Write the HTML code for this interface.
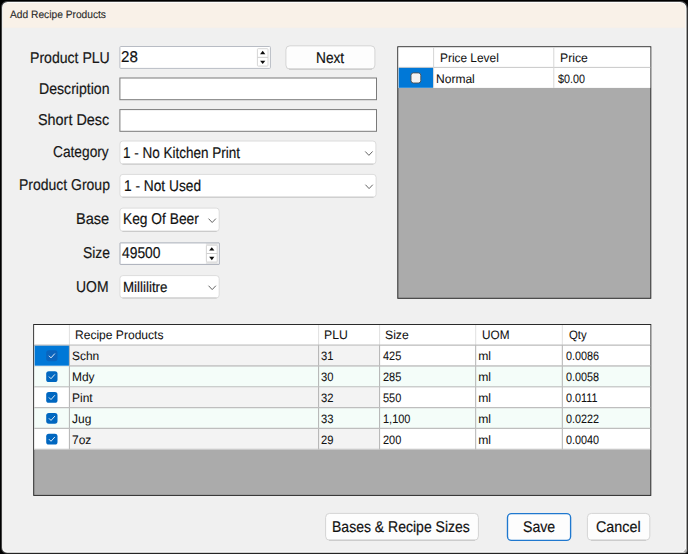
<!DOCTYPE html>
<html>
<head>
<meta charset="utf-8">
<title>Add Recipe Products</title>
<style>
html,body{margin:0;padding:0;}
body{width:688px;height:554px;background:#000;overflow:hidden;position:relative;font-family:"Liberation Sans",sans-serif;color:#111;}
svg#ui{position:absolute;left:0;top:0;}
.t{position:absolute;text-rendering:geometricPrecision;white-space:pre;line-height:1;display:inline-block;transform-origin:left top;}
</style>
</head>
<body>
<svg id="ui" width="688" height="554" viewBox="0 0 688 554">
<path d="M7.10 0.90 H680.70 A7 7 0 0 1 687.70 7.90 V551.10 A2.5 2.5 0 0 1 685.20 553.60 H6.60 A5.5 5.5 0 0 1 1.10 548.10 V6.90 A6 6 0 0 1 7.10 0.90 Z" fill="#4a4a4a"/>
<path d="M7.60 1.90 H680.00 A6.5 6.5 0 0 1 686.50 8.40 V550.70 A2 2 0 0 1 684.50 552.70 H7.10 A5 5 0 0 1 2.10 547.70 V7.40 A5.5 5.5 0 0 1 7.60 1.90 Z" fill="#fdfdfc"/>
<clipPath id="wc"><path d="M7.70 2.90 H679.70 A5.7 5.7 0 0 1 685.40 8.60 V546.90 A4.5 4.5 0 0 1 680.90 551.40 H7.20 A4.2 4.2 0 0 1 3.00 547.20 V7.60 A4.7 4.7 0 0 1 7.70 2.90 Z" fill="#000"/>
</clipPath>
<g clip-path="url(#wc)"><rect x="3.00" y="2.00" width="683.00" height="550.00" fill="#f0f0f0"/>
<rect x="3.00" y="2.00" width="683.00" height="25.80" fill="#f9f1e8"/>
</g>
<path d="M686.3 548.5 L686.3 552.2 L683.0 552.2 Z" fill="#b4b4b4"/>
<rect x="119.90" y="46.50" width="150.50" height="21.90" fill="#fff" stroke="#b8bcc4" stroke-width="1" rx="0.8"/>
<rect x="257.40" y="48.70" width="10.60" height="17.40" fill="#fff" stroke="#d6d6d6" stroke-width="1" rx="0.8"/>
<line x1="257.40" y1="57.35" x2="268.00" y2="57.35" stroke="#cfcfcf" stroke-width="1"/>
<path d="M260.10 54.23 L262.70 50.83 L265.30 54.23 Z" fill="#0c0c0c"/>
<path d="M260.10 60.72 L262.70 64.12 L265.30 60.72 Z" fill="#0c0c0c"/>
<rect x="285.90" y="45.80" width="89.00" height="23.30" fill="#fdfdfd" stroke="#d4d4d4" stroke-width="1" rx="4"/>
<line x1="289.00" y1="69.10" x2="372.00" y2="69.10" stroke="#c4c4c4" stroke-width="1"/>
<rect x="119.90" y="78.00" width="256.60" height="21.70" fill="#fff" stroke="#7a7a7a" stroke-width="1"/>
<rect x="119.90" y="109.60" width="256.60" height="21.70" fill="#fff" stroke="#7a7a7a" stroke-width="1"/>
<rect x="119.90" y="141.00" width="256.00" height="23.10" fill="#fff" stroke="#dcdcdc" stroke-width="1" rx="3"/>
<line x1="122.40" y1="164.10" x2="373.40" y2="164.10" stroke="#c6c6c6" stroke-width="1"/>
<path d="M365.50 151.75 L368.90 155.35 L372.30 151.75" fill="none" stroke="#636363" stroke-width="1.0" stroke-linecap="round" stroke-linejoin="round"/>
<rect x="119.90" y="174.40" width="256.20" height="22.80" fill="#fff" stroke="#dcdcdc" stroke-width="1" rx="3"/>
<line x1="122.40" y1="197.20" x2="373.60" y2="197.20" stroke="#c6c6c6" stroke-width="1"/>
<path d="M365.70 185.00 L369.10 188.60 L372.50 185.00" fill="none" stroke="#636363" stroke-width="1.0" stroke-linecap="round" stroke-linejoin="round"/>
<rect x="119.90" y="208.10" width="99.30" height="23.20" fill="#fff" stroke="#dcdcdc" stroke-width="1" rx="3"/>
<line x1="122.40" y1="231.30" x2="216.70" y2="231.30" stroke="#c6c6c6" stroke-width="1"/>
<path d="M208.80 218.90 L212.20 222.50 L215.60 218.90" fill="none" stroke="#636363" stroke-width="1.0" stroke-linecap="round" stroke-linejoin="round"/>
<rect x="119.90" y="275.60" width="99.30" height="22.40" fill="#fff" stroke="#dcdcdc" stroke-width="1" rx="3"/>
<line x1="122.40" y1="298.00" x2="216.70" y2="298.00" stroke="#c6c6c6" stroke-width="1"/>
<path d="M208.80 286.00 L212.20 289.60 L215.60 286.00" fill="none" stroke="#636363" stroke-width="1.0" stroke-linecap="round" stroke-linejoin="round"/>
<rect x="120.00" y="242.90" width="99.30" height="21.50" fill="#fff"/>
<rect x="205.90" y="243.30" width="11.90" height="20.70" fill="#e9e9e9"/>
<rect x="206.40" y="245.20" width="10.80" height="16.80" fill="#fff" stroke="#d6d6d6" stroke-width="1" rx="0.8"/>
<line x1="206.40" y1="253.50" x2="217.20" y2="253.50" stroke="#cfcfcf" stroke-width="1"/>
<path d="M209.20 250.55 L211.80 247.15 L214.40 250.55 Z" fill="#0c0c0c"/>
<path d="M209.20 256.75 L211.80 260.15 L214.40 256.75 Z" fill="#0c0c0c"/>
<rect x="120.00" y="242.90" width="99.30" height="21.50" fill="none" stroke="#a9aeb9" stroke-width="1" rx="0.3"/>
<rect x="397.80" y="46.80" width="253.00" height="251.50" fill="#ababab" stroke="#2a2a2a" stroke-width="1"/>
<rect x="398.30" y="47.30" width="252.00" height="40.60" fill="#fff"/>
<line x1="398.30" y1="67.40" x2="650.30" y2="67.40" stroke="#c9c9c9" stroke-width="1"/>
<rect x="398.70" y="67.90" width="34.50" height="19.90" fill="#0078d7"/>
<line x1="433.60" y1="47.30" x2="433.60" y2="87.90" stroke="#d6d6d6" stroke-width="1"/>
<line x1="553.80" y1="47.30" x2="553.80" y2="87.90" stroke="#d6d6d6" stroke-width="1"/>
<rect x="411.00" y="72.90" width="9.80" height="10.10" fill="#f3f3f3" stroke="#4e4e4e" stroke-width="0.9" rx="2.4"/>
<rect x="33.70" y="324.50" width="617.10" height="170.90" fill="#ababab" stroke="#2a2a2a" stroke-width="1"/>
<rect x="34.20" y="325.00" width="616.10" height="20.00" fill="#fff"/>
<rect x="34.20" y="345.45" width="616.10" height="20.85" fill="#fff"/>
<rect x="69.40" y="345.45" width="310.20" height="20.85" fill="#f3f3f3"/>
<rect x="34.60" y="345.45" width="34.60" height="20.25" fill="#0078d7"/>
<rect x="46.20" y="350.35" width="11.30" height="10.80" fill="#0a64bd" rx="2.6"/>
<path d="M49.20 356.05 L51.00 357.85 L54.60 353.85" fill="none" stroke="#fff" stroke-opacity="0.88" stroke-width="1" stroke-linecap="round" stroke-linejoin="round"/>
<rect x="34.20" y="366.30" width="616.10" height="20.85" fill="#f4fdf9"/>
<rect x="46.20" y="371.20" width="11.30" height="10.80" fill="#0067c0" rx="2.6"/>
<path d="M49.20 376.90 L51.00 378.70 L54.60 374.70" fill="none" stroke="#fff" stroke-opacity="0.88" stroke-width="1" stroke-linecap="round" stroke-linejoin="round"/>
<rect x="34.20" y="387.15" width="616.10" height="20.85" fill="#fff"/>
<rect x="69.40" y="387.15" width="310.20" height="20.85" fill="#f3f3f3"/>
<rect x="46.20" y="392.05" width="11.30" height="10.80" fill="#0067c0" rx="2.6"/>
<path d="M49.20 397.75 L51.00 399.55 L54.60 395.55" fill="none" stroke="#fff" stroke-opacity="0.88" stroke-width="1" stroke-linecap="round" stroke-linejoin="round"/>
<rect x="34.20" y="408.00" width="616.10" height="20.85" fill="#f4fdf9"/>
<rect x="46.20" y="412.90" width="11.30" height="10.80" fill="#0067c0" rx="2.6"/>
<path d="M49.20 418.60 L51.00 420.40 L54.60 416.40" fill="none" stroke="#fff" stroke-opacity="0.88" stroke-width="1" stroke-linecap="round" stroke-linejoin="round"/>
<rect x="34.20" y="428.85" width="616.10" height="20.85" fill="#fff"/>
<rect x="69.40" y="428.85" width="310.20" height="20.85" fill="#f3f3f3"/>
<rect x="46.20" y="433.75" width="11.30" height="10.80" fill="#0067c0" rx="2.6"/>
<path d="M49.20 439.45 L51.00 441.25 L54.60 437.25" fill="none" stroke="#fff" stroke-opacity="0.88" stroke-width="1" stroke-linecap="round" stroke-linejoin="round"/>
<line x1="69.40" y1="325.00" x2="69.40" y2="344.95" stroke="#e0e0e0" stroke-width="1"/>
<line x1="69.40" y1="344.95" x2="69.40" y2="449.70" stroke="#b2b2b2" stroke-width="1"/>
<line x1="318.60" y1="325.00" x2="318.60" y2="344.95" stroke="#e0e0e0" stroke-width="1"/>
<line x1="318.60" y1="344.95" x2="318.60" y2="449.70" stroke="#b2b2b2" stroke-width="1"/>
<line x1="379.60" y1="325.00" x2="379.60" y2="344.95" stroke="#e0e0e0" stroke-width="1"/>
<line x1="379.60" y1="344.95" x2="379.60" y2="449.70" stroke="#b2b2b2" stroke-width="1"/>
<line x1="475.70" y1="325.00" x2="475.70" y2="344.95" stroke="#e0e0e0" stroke-width="1"/>
<line x1="475.70" y1="344.95" x2="475.70" y2="449.70" stroke="#b2b2b2" stroke-width="1"/>
<line x1="562.30" y1="325.00" x2="562.30" y2="344.95" stroke="#e0e0e0" stroke-width="1"/>
<line x1="562.30" y1="344.95" x2="562.30" y2="449.70" stroke="#b2b2b2" stroke-width="1"/>
<line x1="34.20" y1="345.00" x2="650.30" y2="345.00" stroke="#bebebe" stroke-width="1.15"/>
<line x1="69.40" y1="365.85" x2="650.30" y2="365.85" stroke="#bebebe" stroke-width="1.15"/>
<line x1="34.20" y1="386.70" x2="650.30" y2="386.70" stroke="#bebebe" stroke-width="1.15"/>
<line x1="34.20" y1="407.55" x2="650.30" y2="407.55" stroke="#bebebe" stroke-width="1.15"/>
<line x1="34.20" y1="428.40" x2="650.30" y2="428.40" stroke="#bebebe" stroke-width="1.15"/>
<line x1="34.20" y1="449.25" x2="650.30" y2="449.25" stroke="#bebebe" stroke-width="1.15"/>
<rect x="325.60" y="513.40" width="152.80" height="26.80" fill="#fdfdfd" stroke="#d4d4d4" stroke-width="1" rx="4"/>
<line x1="329.00" y1="540.20" x2="475.00" y2="540.20" stroke="#c4c4c4" stroke-width="1"/>
<rect x="507.50" y="513.60" width="63.10" height="26.80" fill="#fdfdfd" stroke="#1f78cf" stroke-width="1.35" rx="4"/>
<rect x="587.40" y="513.40" width="62.40" height="26.80" fill="#fdfdfd" stroke="#d4d4d4" stroke-width="1" rx="4"/>
<line x1="591.00" y1="540.20" x2="646.00" y2="540.20" stroke="#c4c4c4" stroke-width="1"/>
</svg>
<span class="t" id="ttl" style="left:9.8px;top:10px;font-size:10.7px;color:#2a2a2a;-webkit-text-stroke:0.12px #2a2a2a;transform:scaleX(0.956);">Add Recipe Products</span>
<span class="t" id="l1" style="left:29.85px;top:51px;font-size:15.7px;color:#161616;-webkit-text-stroke:0.18px #161616;transform:scaleX(0.897);">Product PLU</span>
<span class="t" id="l2" style="left:38.6px;top:82px;font-size:15.7px;color:#161616;-webkit-text-stroke:0.18px #161616;transform:scaleX(0.899);">Description</span>
<span class="t" id="l3" style="left:38.33px;top:113px;font-size:15.7px;color:#161616;-webkit-text-stroke:0.18px #161616;transform:scaleX(0.918);">Short Desc</span>
<span class="t" id="l4" style="left:53.03px;top:145px;font-size:15.7px;color:#161616;-webkit-text-stroke:0.18px #161616;transform:scaleX(0.875);">Category</span>
<span class="t" id="l5" style="left:18.61px;top:178px;font-size:15.7px;color:#161616;-webkit-text-stroke:0.18px #161616;transform:scaleX(0.891);">Product Group</span>
<span class="t" id="l6" style="left:76.37px;top:212px;font-size:15.7px;color:#161616;-webkit-text-stroke:0.18px #161616;transform:scaleX(0.929);">Base</span>
<span class="t" id="l7" style="left:82.61px;top:246px;font-size:15.7px;color:#161616;-webkit-text-stroke:0.18px #161616;transform:scaleX(0.886);">Size</span>
<span class="t" id="l8" style="left:76.41px;top:280px;font-size:15.7px;color:#161616;-webkit-text-stroke:0.18px #161616;transform:scaleX(0.889);">UOM</span>
<span class="t" id="v1" style="left:120.53px;top:50px;font-size:15.6px;color:#111;-webkit-text-stroke:0.18px #111;transform:scaleX(0.969);">28</span>
<span class="t" id="bNext" style="left:315.52px;top:51px;font-size:15.5px;color:#111;-webkit-text-stroke:0.18px #111;transform:scaleX(0.884);">Next</span>
<span class="t" id="c1" style="left:122.73px;top:146px;font-size:15.6px;color:#111;-webkit-text-stroke:0.18px #111;transform:scaleX(0.866);">1 - No Kitchen Print</span>
<span class="t" id="c2" style="left:123.82px;top:179px;font-size:15.6px;color:#111;-webkit-text-stroke:0.18px #111;transform:scaleX(0.88);">1 - Not Used</span>
<span class="t" id="c3" style="left:122.87px;top:212px;font-size:15.6px;color:#111;-webkit-text-stroke:0.18px #111;transform:scaleX(0.884);">Keg Of Beer</span>
<span class="t" id="v2" style="left:121.8px;top:246px;font-size:15.6px;color:#111;-webkit-text-stroke:0.18px #111;transform:scaleX(0.888);">49500</span>
<span class="t" id="c4" style="left:122.84px;top:281px;font-size:14.6px;color:#111;-webkit-text-stroke:0.18px #111;transform:scaleX(0.914);">Millilitre</span>
<span class="t" id="h11" style="left:439.53px;top:52px;font-size:12.2px;color:#111;-webkit-text-stroke:0.06px #111;transform:scaleX(0.975);">Price Level</span>
<span class="t" id="h12" style="left:560.3px;top:52px;font-size:12.2px;color:#111;-webkit-text-stroke:0.06px #111;transform:scaleX(1.004);">Price</span>
<span class="t" id="d11" style="left:436.01px;top:73px;font-size:12.2px;color:#111;-webkit-text-stroke:0.06px #111;transform:scaleX(0.987);">Normal</span>
<span class="t" id="d12" style="left:557.5px;top:73px;font-size:12.2px;color:#111;-webkit-text-stroke:0.06px #111;transform:scaleX(0.883);">$0.00</span>
<span class="t" id="h21" style="left:75.01px;top:329px;font-size:12.2px;color:#111;-webkit-text-stroke:0.06px #111;transform:scaleX(0.989);">Recipe Products</span>
<span class="t" id="h22" style="left:324.0px;top:329px;font-size:12.2px;color:#111;-webkit-text-stroke:0.06px #111;transform:scaleX(1.0);">PLU</span>
<span class="t" id="h23" style="left:385.0px;top:329px;font-size:12.2px;color:#111;-webkit-text-stroke:0.06px #111;transform:scaleX(1.0);">Size</span>
<span class="t" id="h24" style="left:481.73px;top:329px;font-size:12.2px;color:#111;-webkit-text-stroke:0.06px #111;transform:scaleX(0.967);">UOM</span>
<span class="t" id="h25" style="left:568.97px;top:329px;font-size:12.2px;color:#111;-webkit-text-stroke:0.06px #111;transform:scaleX(0.933);">Qty</span>
<span class="t" id="b1" style="left:332.1px;top:520px;font-size:15.5px;color:#111;-webkit-text-stroke:0.18px #111;transform:scaleX(0.904);">Bases &amp; Recipe Sizes</span>
<span class="t" id="b2" style="left:522.59px;top:520px;font-size:15.5px;color:#111;-webkit-text-stroke:0.18px #111;transform:scaleX(0.912);">Save</span>
<span class="t" id="b3" style="left:595.58px;top:520px;font-size:15.5px;color:#111;-webkit-text-stroke:0.18px #111;transform:scaleX(0.924);">Cancel</span>
<span class="t" id="r00" style="left:72.02px;top:350px;font-size:12.2px;color:#111;-webkit-text-stroke:0.06px #111;transform:scaleX(0.981);">Schn</span>
<span class="t" id="r01" style="left:320.58px;top:350px;font-size:12.2px;color:#111;-webkit-text-stroke:0.06px #111;transform:scaleX(0.917);">31</span>
<span class="t" id="r02" style="left:382.5px;top:350px;font-size:12.2px;color:#111;-webkit-text-stroke:0.06px #111;transform:scaleX(0.9);">425</span>
<span class="t" id="r03" style="left:478.2px;top:350px;font-size:12.2px;color:#111;-webkit-text-stroke:0.06px #111;transform:scaleX(1.0);">ml</span>
<span class="t" id="r04" style="left:566.1px;top:350px;font-size:12.2px;color:#111;-webkit-text-stroke:0.06px #111;transform:scaleX(0.889);">0.0086</span>
<span class="t" id="r10" style="left:72.02px;top:371px;font-size:12.2px;color:#111;-webkit-text-stroke:0.06px #111;transform:scaleX(0.981);">Mdy</span>
<span class="t" id="r11" style="left:320.58px;top:371px;font-size:12.2px;color:#111;-webkit-text-stroke:0.06px #111;transform:scaleX(0.917);">30</span>
<span class="t" id="r12" style="left:382.5px;top:371px;font-size:12.2px;color:#111;-webkit-text-stroke:0.06px #111;transform:scaleX(0.9);">285</span>
<span class="t" id="r13" style="left:478.2px;top:371px;font-size:12.2px;color:#111;-webkit-text-stroke:0.06px #111;transform:scaleX(1.0);">ml</span>
<span class="t" id="r14" style="left:566.1px;top:371px;font-size:12.2px;color:#111;-webkit-text-stroke:0.06px #111;transform:scaleX(0.889);">0.0058</span>
<span class="t" id="r20" style="left:72.02px;top:392px;font-size:12.2px;color:#111;-webkit-text-stroke:0.06px #111;transform:scaleX(0.981);">Pint</span>
<span class="t" id="r21" style="left:320.58px;top:392px;font-size:12.2px;color:#111;-webkit-text-stroke:0.06px #111;transform:scaleX(0.917);">32</span>
<span class="t" id="r22" style="left:382.5px;top:392px;font-size:12.2px;color:#111;-webkit-text-stroke:0.06px #111;transform:scaleX(0.9);">550</span>
<span class="t" id="r23" style="left:478.2px;top:392px;font-size:12.2px;color:#111;-webkit-text-stroke:0.06px #111;transform:scaleX(1.0);">ml</span>
<span class="t" id="r24" style="left:566.1px;top:392px;font-size:12.2px;color:#111;-webkit-text-stroke:0.06px #111;transform:scaleX(0.889);">0.0111</span>
<span class="t" id="r30" style="left:72.02px;top:413px;font-size:12.2px;color:#111;-webkit-text-stroke:0.06px #111;transform:scaleX(0.981);">Jug</span>
<span class="t" id="r31" style="left:320.58px;top:413px;font-size:12.2px;color:#111;-webkit-text-stroke:0.06px #111;transform:scaleX(0.917);">33</span>
<span class="t" id="r32" style="left:382.5px;top:413px;font-size:12.2px;color:#111;-webkit-text-stroke:0.06px #111;transform:scaleX(0.9);">1,100</span>
<span class="t" id="r33" style="left:478.2px;top:413px;font-size:12.2px;color:#111;-webkit-text-stroke:0.06px #111;transform:scaleX(1.0);">ml</span>
<span class="t" id="r34" style="left:566.1px;top:413px;font-size:12.2px;color:#111;-webkit-text-stroke:0.06px #111;transform:scaleX(0.889);">0.0222</span>
<span class="t" id="r40" style="left:72.02px;top:434px;font-size:12.2px;color:#111;-webkit-text-stroke:0.06px #111;transform:scaleX(0.981);">7oz</span>
<span class="t" id="r41" style="left:320.58px;top:434px;font-size:12.2px;color:#111;-webkit-text-stroke:0.06px #111;transform:scaleX(0.917);">29</span>
<span class="t" id="r42" style="left:382.5px;top:434px;font-size:12.2px;color:#111;-webkit-text-stroke:0.06px #111;transform:scaleX(0.9);">200</span>
<span class="t" id="r43" style="left:478.2px;top:434px;font-size:12.2px;color:#111;-webkit-text-stroke:0.06px #111;transform:scaleX(1.0);">ml</span>
<span class="t" id="r44" style="left:566.1px;top:434px;font-size:12.2px;color:#111;-webkit-text-stroke:0.06px #111;transform:scaleX(0.889);">0.0040</span>
</body>
</html>
